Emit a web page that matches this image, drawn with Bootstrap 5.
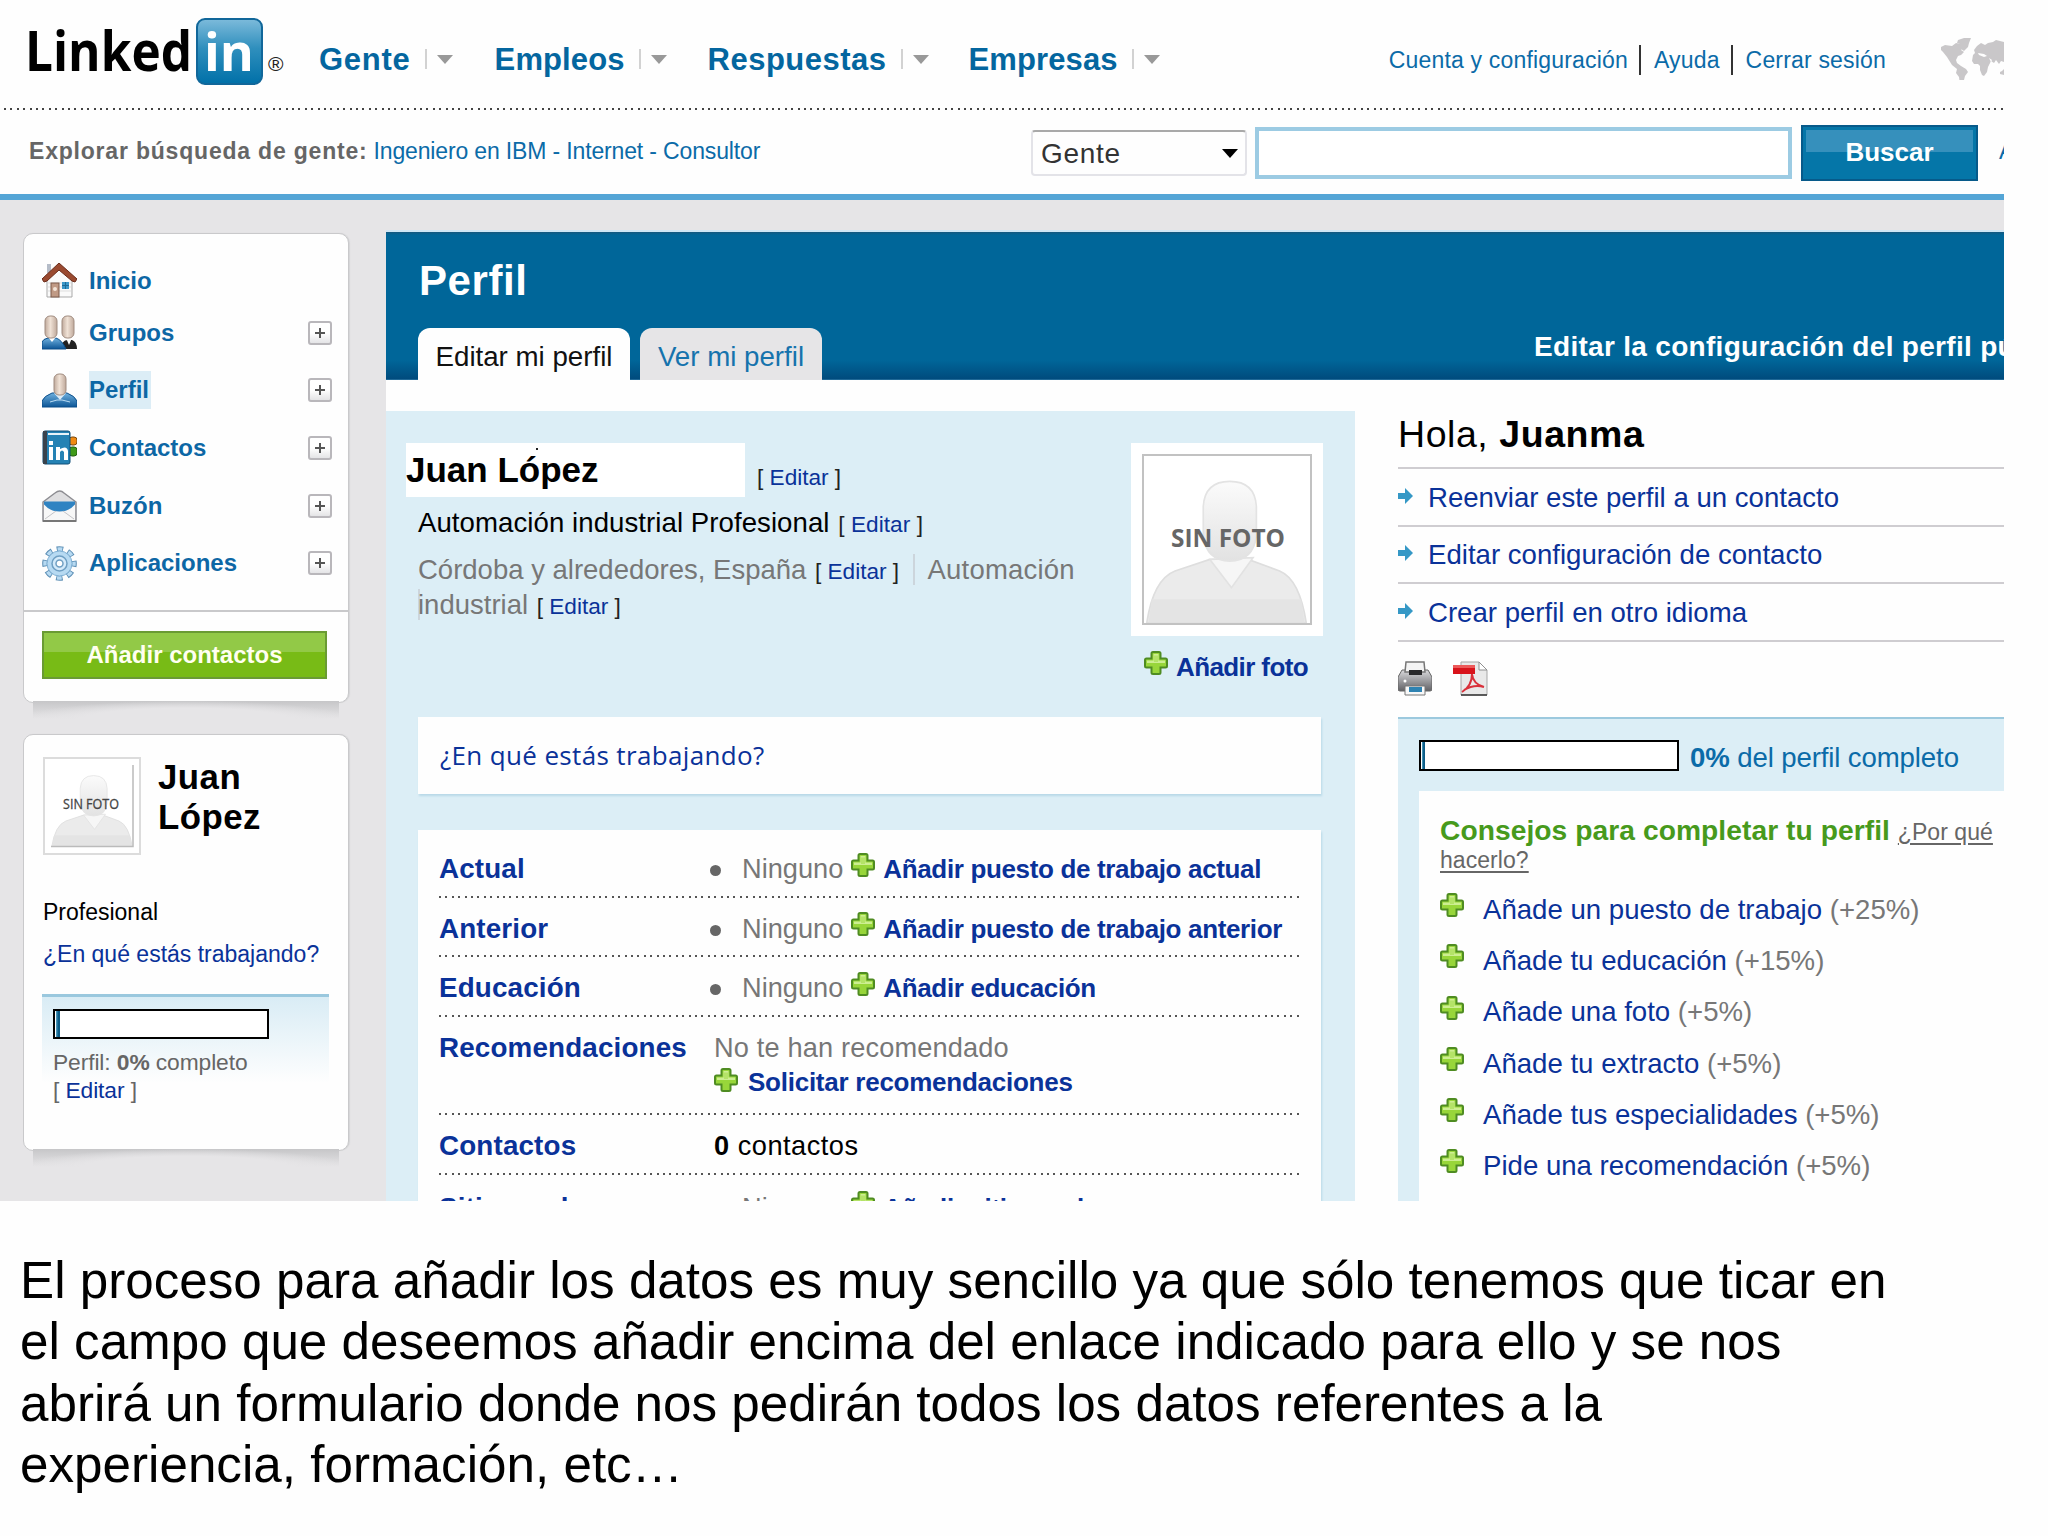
<!DOCTYPE html>
<html lang="es">
<head>
<meta charset="utf-8">
<meta name="viewport" content="width=device-width, initial-scale=1">
<title>LinkedIn - Perfil</title>
<link href="https://cdn.jsdelivr.net/npm/bootstrap@5.3.0/dist/css/bootstrap.min.css" rel="stylesheet">
<style>
body{font-family:"Liberation Sans",Arial,sans-serif;background:#fefefe;color:#000;overflow:hidden;font-size:27.6px}
a{text-decoration:none;color:#0a3299}
svg{display:block;flex:none}
.shot{width:2004px;height:1201px;overflow:hidden;background:#e6e5e7;white-space:nowrap}
.sky a,.sky{color:#0b6ba8}
.top-row{height:108px;padding:10px 0 0 29px;background:#fefefe}
.dots{height:3px;background:repeating-linear-gradient(90deg,#444 0 2px,transparent 2px 6.4px) 4px 0/100% 2px no-repeat #fefefe}
.nav-main{margin-left:35px;gap:40px}
.nav-main a{font-size:31px;font-weight:700;line-height:40px;color:#04669f;letter-spacing:.1px;margin-top:1px}
.nav-main div:nth-child(1) a{letter-spacing:.75px}
.nav-main div:nth-child(1){margin-right:2px}
.nav-main div:nth-child(2){margin-right:1px}
.nav-main div:nth-child(3) a{letter-spacing:.5px}
.tri{border-left:2px solid #d2d2d2;height:20px;padding:6px 0 0 10px;margin-left:14px}
.tri::after{content:"";display:block;border:8px solid transparent;border-top:9px solid #999;border-bottom:0}
.util{font-size:23px;letter-spacing:.18px;padding-top:1px}
.util a+a{border-left:2px solid #333;margin-left:11px;padding-left:13px}
.util a{line-height:30px}
.globe{margin-left:55px}
.search-row{height:83px;background:#fefefe;padding-left:29px}
.search-row>*{flex:none}
.explore{font-size:23px;margin-top:-2px;letter-spacing:-.15px}
.browse{width:1002px}
.explore b{color:#666;letter-spacing:.8px;margin-right:6px}
.pick{width:216px;height:46px;border:2px solid #e3e3e8;border-top:2px solid #a9a9a9;border-radius:4px;padding:2px 7px 0 8px;color:#333;font-size:28px;letter-spacing:.7px;margin-right:8px}
.pick::after{content:"";border:8px solid transparent;border-top:9px solid #000;border-bottom:0}
.field{width:537px;height:52px;border:4px solid #9ccbe3;border-radius:0;padding:0;margin-right:9px}
.go{width:177px;height:56px;border:2px solid #075a8a;box-shadow:inset 0 0 0 3px #0576a8;background:linear-gradient(#3690bc 25px,#0576a8 25px);color:#fff;font-weight:700;font-size:26px;border-radius:0;padding:0;margin-right:21px}
.go:hover{color:#fff}
.blue-line{height:6px;background:#54a5d6}
.side{width:326px;margin:33px 37px 0 23px}
.pane{background:#fefefe;border:1px solid #c9c9cb;border-radius:10px;box-shadow:1px 0 1px #d4d4d6}
.pane-shadow{height:18px;margin:-2px 10px 0;background:radial-gradient(ellipse 55% 100% at 50% 100%,#e6e5e7 60%,transparent 100%),linear-gradient(#c6c6c8,#e6e5e7)}
.menu{padding:23px 16px 0 18px;height:376px}
.menu li{height:57.6px}
.menu li:first-child{height:47px}
.menu a{font-size:24px;font-weight:700;color:#0d67a5;line-height:38px;margin-left:12px}
.menu .here{background:#dcedf6;padding-right:2px}
.more{width:24px;height:24px;border:2px solid #b9b7bb;border-radius:3px;background:linear-gradient(#fff 50%,#e4e4e6)}
.add-btn{display:block;width:285px;height:48px;margin:19px 0 0 18px;border:2px solid #6a9b34;border-radius:0;background:linear-gradient(#92c947 19px,#78bb16 19px);color:#fffff0;font-size:24px;font-weight:700;line-height:43px;padding:0}
.me{padding:22px 19px 0;height:417px}
.me .thumb{border:2px solid #dcdcdc;background:#fff}
.me h2{font-size:34.8px;line-height:40px;font-weight:700;margin:0 0 0 17px;letter-spacing:.5px}
.me p{font-size:23px;line-height:42px;margin:0}
.fade-box{height:88px;margin:19px 0 0 -1px;width:287px;border-top:3px solid #9ac8de;background:linear-gradient(#d9ecf5,#fefefe 86px);padding:12px 0 0 11px;font-size:22.8px;line-height:28px;color:#666;letter-spacing:-.1px}
.meter{border:2.5px solid #000;background:#fff;padding:0 1px}
.meter i{display:block;height:100%;background:linear-gradient(90deg,#5aa7c6,#0a5b86 55%)}
.main-col{width:1618px;margin-top:30px;border-top:2px solid #cfe6f5;background:#fefefe}
.hero{height:148px;background:linear-gradient(#15587f,#006699 3px,#006699 128px,#004b7d 147px,#3f86b0 148px);padding:24px 0 0 32px}
.hero h1{font-size:42px;line-height:50px;font-weight:700;color:#fff;margin:0 0 22px 1px;letter-spacing:.6px}
.hero .nav-tabs{border:0;gap:10px}
.hero .nav-link{border:0;border-radius:12px 12px 0 0;height:52px;padding:0;font-size:27.7px;line-height:58px;text-align:center;color:#1673ad;background:#e6e5e7}
.hero .nav-link.active{background:#fefefe;color:#111}
.w1{width:212px}.w2{width:182px}
.pub{width:470px;overflow:hidden;color:#fff;font-weight:700;font-size:28px;line-height:37px;letter-spacing:.3px}
.profile{width:969px;height:800px;margin-top:31px;background:#dceef6;padding:32px 33px 0 20px}
.who{width:725px}
.name-box{width:339px;height:54px;background:#fff;font-size:35px;line-height:54px;font-weight:700;margin:0;position:relative}
.name-box::after{content:"";position:absolute;left:130px;top:5px;width:2px;height:2px;background:#222}
.ed{font-size:22.6px;line-height:1;color:#222}
.line1{margin:9px 0 0 12px;line-height:34px;letter-spacing:.06px}
.line2{margin:13px 0 0 12px;line-height:34.5px;color:#777;font-size:27.5px}
.line2 .ed{margin-left:1px}
.ind{border-left:2px solid #ccd5dc}
.pic{padding:11px;background:#fff;width:192px;height:193px}
.pic>svg{border:2px solid #c2c2c2}
.addpic{margin:11px 0 0 13px;height:40px}
.bold-link{font-weight:700;font-size:26px;letter-spacing:-.35px}
.sheet{background:#fefefe;margin-left:12px;width:903px;box-shadow:1px 2px 2px #b9d9e8}
.work{height:77px;line-height:77px;margin-top:27px;padding-left:22px;font-family:"Open Sans","Liberation Sans",sans-serif;font-size:26px;letter-spacing:.35px}
.facts{margin-top:36px;padding:8px 21px 0 21px;height:420px}
.fact{padding:14px 0 11px;line-height:34.5px;background:repeating-linear-gradient(90deg,#555 0 2px,transparent 2px 6.4px) bottom/100% 2px no-repeat}
.fact.tall{padding-bottom:15.5px}
.fact dt{width:275px;color:#0a3299;font-size:27.8px;letter-spacing:.15px}
.fact:nth-child(n+6){padding-top:16px}
.fact dd{margin:0;color:#777;font-size:27.2px}
.bul{width:11px;height:11px;border-radius:50%;background:#666;margin:3px 21px 0 -4px}
.plus{width:24px;height:24px}
.fact dd>.plus{margin:-9px 8px 0 8px}
.line-dd{height:34.5px}
.right-col{width:606px;margin-left:43px}
.right-col h2{font-size:37.5px;line-height:44px;margin:32px 0 11px;letter-spacing:.55px}
.right-col .acts li{height:57.6px;border-top:2px solid #cfcdd1;font-size:27.6px;padding-top:1px}
.acts svg{margin:-3px 15px 0 0}
.tools{border-top:2px solid #cfcdd1;padding-top:19px;height:77px;gap:21px}
.done{border-top:2px solid #9cc9de;background:#dceef6;padding-left:21px;height:500px}
.done-head{height:72px;padding-top:5px;letter-spacing:-.12px}
.tips{background:#fefefe;height:430px;padding:25px 0 0 21px}
.tips h3{font-size:28.2px;line-height:29px;margin:0;color:#479a1c;font-weight:700;letter-spacing:.06px}
.tips h3 a{font-size:23px;line-height:1;font-weight:400;color:#666;text-decoration:underline;text-underline-offset:3px}
.tips h3 span{display:block;margin-top:-1px}
.tips li{height:51.3px;line-height:51.3px;color:#777}
.tips li svg{margin:-9px 19px 0 0}
.tips ul{margin-top:11px}
.note{font-size:51.2px;line-height:61.4px;margin:49px 0 0 20px;white-space:nowrap}
</style>
</head>
<body>
<svg width="0" height="0" class="position-absolute">
<defs>
<linearGradient id="gIn" x2="0" y2="1"><stop offset="0" stop-color="#7dbbdb"/><stop offset=".45" stop-color="#2f8fbd"/><stop offset="1" stop-color="#0070a8"/></linearGradient>
<linearGradient id="gMan" x2="0" y2="1"><stop offset="0" stop-color="#fbfbfb"/><stop offset="1" stop-color="#e2e2e2"/></linearGradient>
<linearGradient id="gSkin" x2="1" y2="0"><stop offset="0" stop-color="#c0aa9c"/><stop offset=".45" stop-color="#f0e2d6"/><stop offset="1" stop-color="#bfa99b"/></linearGradient>
<linearGradient id="gSuit" x2="0" y2="1"><stop offset="0" stop-color="#6fb0de"/><stop offset="1" stop-color="#0c5596"/></linearGradient>
<linearGradient id="gPrn" x2="0" y2="1"><stop offset="0" stop-color="#d9d9dc"/><stop offset="1" stop-color="#626266"/></linearGradient>
<symbol id="plus" viewBox="0 0 24 24"><path d="M7.500 2.500q0-1.500 1.500-1.500h6q1.500 0 1.500 1.500v5h5q1.500 0 1.500 1.500v6q0 1.500-1.500 1.500h-5v5q0 1.500-1.500 1.500h-6q-1.500 0-1.500-1.500v-5h-5q-1.500 0-1.500-1.500v-6q0-1.500 1.500-1.500h5z" fill="#98d63a" stroke="#4f8c22" stroke-width="2"/><path d="M9.500 3h5v6.500h6.500V12H3V9.500h6.500z" fill="#cdee92"/><path d="M10 4.500h4v6.500h-4z" fill="#b4e368"/></symbol>
<symbol id="man" viewBox="0 0 100 100"><path d="M2 100Q6 74 19 69L40 62H63L82 69Q94 74 98 100Z" fill="#ebebeb" stroke="#dedede"/><path d="M5 86H95L97 100H3Z" fill="#e4e4e4"/><path d="M40 62L53 79L66 61Z" fill="#f6f6f6" stroke="#e2e2e2"/><path d="M36 30Q37 15 52 15Q67 15 68 30V48Q66 63 52 63Q38 63 36 48Z" fill="url(#gMan)" stroke="#e3e3e3"/></symbol>
<symbol id="arrow" viewBox="0 0 15 16"><path d="M0 5h7V0l8 8-8 8v-5H0z" fill="#3598c6"/></symbol>
<symbol id="pm" viewBox="0 0 20 20"><path d="M10 5v10M5 10h10" stroke="#555" stroke-width="2"/></symbol>
</defs>
</svg>

<div class="shot">
  <header>
    <div class="top-row d-flex align-items-center">
      <svg class="overflow-visible" width="255" height="82" viewBox="29 18 255 82">
        <text x="25" y="71" font-family="Open Sans" font-weight="700" font-size="55" textLength="167" lengthAdjust="spacingAndGlyphs" fill="#000">Linked</text>
        <rect x="197" y="19" width="65" height="65" rx="8" fill="url(#gIn)" stroke="#11679a" stroke-width="2"/>
        <text x="204" y="71" font-family="Open Sans" font-weight="700" font-size="52" textLength="50" lengthAdjust="spacingAndGlyphs" fill="#fff">in</text>
        <text x="268" y="71" font-family="Liberation Sans" font-size="21" fill="#222">®</text>
      </svg>
      <nav class="nav-main d-flex">
        <div class="d-flex align-items-center"><a href="#">Gente</a><span class="tri"></span></div>
        <div class="d-flex align-items-center"><a href="#">Empleos</a><span class="tri"></span></div>
        <div class="d-flex align-items-center"><a href="#">Respuestas</a><span class="tri"></span></div>
        <div class="d-flex align-items-center"><a href="#">Empresas</a><span class="tri"></span></div>
      </nav>
      <div class="util sky ms-auto d-flex"><a href="#">Cuenta y configuración</a><a href="#">Ayuda</a><a href="#">Cerrar sesión</a></div>
      <svg class="globe" width="63" height="42" viewBox="0 0 63 42" fill="#c9c7c9"><path d="M0 9l4-2 7 1 4-3 5 1 2 4-2 2 3 2-3 3-3 1-2 4 1 3 4 3 5 3 2 3-3 4-1 4-3 6-1-1-1-8-3-4 1-4-5-4-5-8-4-5-2-2z"/><path d="M17 2l6-2h7l-2 5-1 4-4 4-3-2-1-5-3-1z"/><path d="M34 15l-1-3 3-4 4-3 4 2 3-2 5-1 3-2 8 2v20l-3-1-2 3-3-4-2 3-3-2-3 6-1 5-3 4-2-1-2-5v-4l-2-2-4 0-2-3 1-6z"/><path d="M59 34l2-1 2-2v6l-4-1z"/><path d="M37 15l6 1 3 2-3 1-5-2zM48 20l3 2-1 2z" fill="#fefefe"/></svg>
    </div>
    <div class="dots"></div>
    <div class="search-row d-flex align-items-center">
      <div class="explore browse sky"><b>Explorar búsqueda de gente:</b><a href="#">Ingeniero en IBM</a> - <a href="#">Internet</a> - <a href="#">Consultor</a></div>
      <div class="pick d-flex align-items-center justify-content-between">Gente</div>
      <input class="field form-control" type="text" aria-label="Buscar">
      <button class="go btn">Buscar</button>
      <a class="explore sky" href="#">Avanzada</a>
    </div>
    <div class="blue-line"></div>
  </header>

  <div class="d-flex">
    <aside class="side flex-shrink-0">
      <section class="pane" style="height:470px">
        <ul class="menu list-unstyled mb-0">
          <li class="d-flex align-items-center">
            <svg width="35" height="35" viewBox="0 0 35 35"><rect x="5" y="1" width="4" height="9" fill="#b5bcc8"/><path d="M5 16L17 5l13 11v18H5z" fill="#fafafa" stroke="#a9a9a9"/><path d="M6 20h23M6 24h23M6 28h23" stroke="#ddd"/><path d="M0 16L17 0l18 16-2 3-3-1L17 7 5 18l-3 1z" fill="#9a4a30" stroke="#6b2c1a"/><rect x="9" y="20" width="8" height="14" fill="#c09a85" stroke="#7d5a4a"/><circle cx="13" cy="26" r="2" fill="#f3e4d8"/><rect x="20" y="19" width="7" height="7" fill="#3c97c8"/><path d="M23.500 19v7M20 22.500h7" stroke="#1c6a98"/></svg>
            <a href="#">Inicio</a></li>
          <li class="d-flex align-items-center">
            <svg width="35" height="35" viewBox="0 0 35 35"><path d="M20 34q-1-9 6-9h4q5 2 5 9z" fill="#222"/><path d="M24 23l3 7 3-7z" fill="#fff"/><path d="M0 34v-7q1-3 6-4h8q6 2 10 11z" fill="url(#gSuit)" stroke="#0c4f8a"/><path d="M6 22l4 5 4-5z" fill="#fff"/><rect x="3" y="1" width="12" height="22" rx="5" fill="url(#gSkin)" stroke="#a08c80"/><rect x="20" y="1" width="12" height="22" rx="5" fill="url(#gSkin)" stroke="#a08c80"/></svg>
            <a href="#">Grupos</a><span class="more ms-auto"><svg width="20" height="20"><use href="#pm"/></svg></span></li>
          <li class="d-flex align-items-center">
            <svg width="35" height="35" viewBox="0 0 35 35"><path d="M0 34v-6q2-5 10-8h15q8 3 10 8v6z" fill="url(#gSuit)" stroke="#0c4f8a"/><path d="M12 20l6 7 6-7z" fill="#dcebf6"/><path d="M8 29l7-2 5 0 8 2" stroke="#b9dbf3" fill="none"/><rect x="12" y="1" width="12" height="21" rx="5" fill="url(#gSkin)" stroke="#a08c80"/></svg>
            <a class="here" href="#">Perfil</a><span class="more ms-auto"><svg width="20" height="20"><use href="#pm"/></svg></span></li>
          <li class="d-flex align-items-center">
            <svg width="35" height="35" viewBox="0 0 35 35"><rect x="27" y="7" width="8" height="8" rx="3" fill="#f08a12" stroke="#7a4a10"/><rect x="27" y="17" width="8" height="9" rx="3" fill="#3f9a18" stroke="#245f10"/><rect x="1" y="1" width="27" height="33" rx="2" fill="#2582b4" stroke="#0f4f78"/><path d="M1 1h4v33H1z" fill="#39424c"/><path d="M6 4h21" stroke="#e8f3f9" stroke-width="2"/><path d="M7 11h4v4H7zM7 17h4v13H7zM14 17h4v2q7-4 8 2v9h-4v-8q-2-3-4 0v8h-4z" fill="#fff"/></svg>
            <a href="#">Contactos</a><span class="more ms-auto"><svg width="20" height="20"><use href="#pm"/></svg></span></li>
          <li class="d-flex align-items-center">
            <svg width="35" height="32" viewBox="0 0 35 32"><path d="M1 12L13 3q5-4 9 0l12 9v19H1z" fill="#dedee0" stroke="#8d8d92" stroke-width="1.500"/><path d="M2 12h31v18H2z" fill="#f7f7f7"/><path d="M2 11.500h31v3q-6 7-15.500 7T2 14.500z" fill="#2f83c2"/><path d="M3 29l11-8M32 29l-11-8" stroke="#c4c4c8"/><path d="M1 31h33" stroke="#777" stroke-width="2"/></svg>
            <a href="#">Buzón</a><span class="more ms-auto"><svg width="20" height="20"><use href="#pm"/></svg></span></li>
          <li class="d-flex align-items-center">
            <svg width="35" height="35" viewBox="0 0 35 35"><circle cx="17.500" cy="17.500" r="14.800" fill="none" stroke="#5d8fb5" stroke-width="5" stroke-dasharray="6.600 5.020" stroke-dashoffset="3.300"/><circle cx="17.500" cy="17.500" r="14.500" fill="none" stroke="#b7daf2" stroke-width="3.500" stroke-dasharray="4.800 6.590" stroke-dashoffset="2.400"/><circle cx="17.500" cy="17.500" r="12.500" fill="#b7daf2" stroke="#7fb0d4"/><circle cx="17.500" cy="17.500" r="7.500" fill="#d4eafa" stroke="#6f9fc3" stroke-width="1.500"/><circle cx="17.500" cy="17.500" r="3.500" fill="#fff" stroke="#6f9fc3" stroke-width="1.500"/></svg>
            <a href="#">Aplicaciones</a><span class="more ms-auto"><svg width="20" height="20"><use href="#pm"/></svg></span></li>
        </ul>
        <div class="border-top border-2" style="border-color:#c9c9cb!important"><a class="add-btn btn" href="#">Añadir contactos</a></div>
      </section>
      <div class="pane-shadow"></div>
      <section class="pane me" style="margin-top:15px">
        <div class="d-flex pb-2">
          <div class="thumb"><svg width="94" height="94" viewBox="0 0 94 94"><use href="#man" x="5" y="4" width="84" height="84"/><path d="M6 87.500H88V6" fill="none" stroke="#bbb" stroke-width="1.500"/><text x="18" y="50" font-family="Open Sans" font-size="14.500" textLength="56" lengthAdjust="spacingAndGlyphs" fill="#444" stroke="#444" stroke-width=".3">SIN FOTO</text></svg></div>
          <h2>Juan<br>López</h2>
        </div>
        <p style="margin-top:28px">Profesional</p>
        <p><a href="#">¿En qué estás trabajando?</a></p>
        <div class="fade-box">
          <div class="meter" style="width:216px;height:30px;margin-bottom:9px"><i style="width:4px"></i></div>
          Perfil: <b>0%</b> completo<br>[ <a href="#">Editar</a> ]
        </div>
      </section>
      <div class="pane-shadow"></div>
    </aside>

    <main class="main-col flex-shrink-0">
      <div class="hero">
        <h1>Perfil</h1>
        <div class="d-flex">
          <div class="nav nav-tabs"><a class="nav-link active w1" href="#">Editar mi perfil</a><a class="nav-link w2" href="#">Ver mi perfil</a></div>
          <a class="pub ms-auto" href="#">Editar la configuración del perfil público</a>
        </div>
      </div>
      <div class="d-flex">
        <section class="profile flex-shrink-0">
          <div class="d-flex" style="height:247px">
            <div class="who flex-shrink-0">
              <div class="d-flex"><h2 class="name-box">Juan López</h2><span class="ed" style="padding:24px 0 0 12px">[ <a href="#">Editar</a> ]</span></div>
              <p class="line1 mb-0">Automación industrial Profesional <span class="ed" style="margin-left:1px">[ <a href="#">Editar</a> ]</span></p>
              <p class="line2 mb-0">Córdoba y alrededores, España <span class="ed">[ <a href="#">Editar</a> ]</span> <span class="ind ps-2" style="margin-left:6px">&#8202;<span style="letter-spacing:.2px">&#8202;Automación</span></span><br><span class="ind" style="margin-right:-2px"></span>industrial <span class="ed">[ <a href="#">Editar</a> ]</span></p>
            </div>
            <div>
              <div class="pic"><svg width="170" height="171" viewBox="0 0 166 167"><use href="#man" width="166" height="167" x="-.5"/><text x="27" y="91" font-family="Open Sans" font-weight="700" font-size="25.500" textLength="114" lengthAdjust="spacingAndGlyphs" fill="#666">SIN FOTO</text></svg></div>
              <div class="addpic d-flex align-items-center"><svg class="plus" style="margin:-8px 8px 0 0"><use href="#plus"/></svg><a class="bold-link" href="#" style="letter-spacing:-.6px">Añadir foto</a></div>
            </div>
          </div>
          <div class="sheet work"><a href="#">¿En qué estás trabajando?</a></div>
          <dl class="sheet facts mb-0">
            <div class="fact d-flex"><dt>Actual</dt><dd class="line-dd d-flex align-items-center"><span class="bul"></span>Ninguno<svg class="plus"><use href="#plus"/></svg><a class="bold-link" href="#">Añadir puesto de trabajo actual</a></dd></div>
            <div class="fact d-flex"><dt>Anterior</dt><dd class="line-dd d-flex align-items-center"><span class="bul"></span>Ninguno<svg class="plus"><use href="#plus"/></svg><a class="bold-link" href="#">Añadir puesto de trabajo anterior</a></dd></div>
            <div class="fact d-flex"><dt>Educación</dt><dd class="line-dd d-flex align-items-center"><span class="bul"></span>Ninguno<svg class="plus"><use href="#plus"/></svg><a class="bold-link" href="#">Añadir educación</a></dd></div>
            <div class="fact tall d-flex"><dt>Recomendaciones</dt><dd><span style="letter-spacing:.15px">No te han recomendado</span><div class="d-flex align-items-center"><svg class="plus" style="margin:-5px 10px 0 0"><use href="#plus"/></svg><a class="bold-link" href="#" style="letter-spacing:-.25px">Solicitar recomendaciones</a></div></dd></div>
            <div class="fact d-flex"><dt>Contactos</dt><dd class="text-black" style="letter-spacing:.5px"><b>0</b> contactos</dd></div>
            <div class="fact d-flex"><dt>Sitios web</dt><dd class="line-dd d-flex align-items-center"><span class="bul"></span>Ninguno<svg class="plus"><use href="#plus"/></svg><a class="bold-link" href="#">Añadir sitios web</a></dd></div>
          </dl>
        </section>

        <aside class="right-col flex-shrink-0">
          <h2>Hola, <b>Juanma</b></h2>
          <ul class="acts list-unstyled mb-0">
            <li class="d-flex align-items-center"><svg width="15" height="16"><use href="#arrow"/></svg><a href="#">Reenviar este perfil a un contacto</a></li>
            <li class="d-flex align-items-center"><svg width="15" height="16"><use href="#arrow"/></svg><a href="#">Editar configuración de contacto</a></li>
            <li class="d-flex align-items-center"><svg width="15" height="16"><use href="#arrow"/></svg><a href="#">Crear perfil en otro idioma</a></li>
          </ul>
          <div class="tools d-flex">
            <svg width="34" height="35" viewBox="0 0 34 35"><path d="M4 9h26l4 7v12q0 2-2 2H2q-2 0-2-2V16z" fill="url(#gPrn)" stroke="#666"/><path d="M8 1h18l1 10H7z" fill="#f4f4f4" stroke="#777" stroke-width="1.500"/><path d="M11 9h13v5H11z" fill="#2a2a2c"/><circle cx="7" cy="20" r="1.500" fill="#fff"/><path d="M7 25h20v9H7z" fill="#f8f8f8" stroke="#777"/><path d="M11 26h13v5H11z" fill="#2f83b2"/></svg>
            <svg width="35" height="35" viewBox="0 0 35 35"><path d="M8 1h18l8 8v25H8z" fill="#e9e9e9" stroke="#a5a5a5"/><path d="M26 1v8h8z" fill="#fff" stroke="#8f8f8f"/><path d="M8 34h26" stroke="#333" stroke-width="1.500"/><path d="M0 4h22v9H0z" fill="#d8131b"/><path d="M0 4h22v3H0z" fill="#ec5a5a"/><path d="M9 31q10-6 10-18q1 10 12 13q-10-3-20 3" fill="none" stroke="#d9303a" stroke-width="2"/></svg>
          </div>
          <section class="done">
            <div class="done-head d-flex align-items-center sky"><div class="meter" style="width:260px;height:31px;margin:-4px 11px 0 0"><i style="width:3px"></i></div><span><b>0%</b> del perfil completo</span></div>
            <div class="tips">
              <h3>Consejos para completar tu perfil <a href="#">¿Por qué</a><span><a href="#">hacerlo?</a></span></h3>
              <ul class="list-unstyled mb-0">
                <li class="d-flex align-items-center"><svg class="plus"><use href="#plus"/></svg><span><a href="#">Añade un puesto de trabajo</a> (+25%)</span></li>
                <li class="d-flex align-items-center"><svg class="plus"><use href="#plus"/></svg><span><a href="#">Añade tu educación</a> (+15%)</span></li>
                <li class="d-flex align-items-center"><svg class="plus"><use href="#plus"/></svg><span><a href="#">Añade una foto</a> (+5%)</span></li>
                <li class="d-flex align-items-center"><svg class="plus"><use href="#plus"/></svg><span><a href="#">Añade tu extracto</a> (+5%)</span></li>
                <li class="d-flex align-items-center"><svg class="plus"><use href="#plus"/></svg><span><a href="#">Añade tus especialidades</a> (+5%)</span></li>
                <li class="d-flex align-items-center"><svg class="plus"><use href="#plus"/></svg><span><a href="#">Pide una recomendación</a> (+5%)</span></li>
              </ul>
            </div>
          </section>
        </aside>
      </div>
    </main>
  </div>
</div>
<p class="note">El proceso para añadir los datos es muy sencillo ya que sólo tenemos que ticar en<br>el campo que deseemos añadir encima del enlace indicado para ello y se nos<br>abrirá un formulario donde nos pedirán todos los datos referentes a la<br>experiencia, formación, etc…</p>
<script src="https://cdn.jsdelivr.net/npm/bootstrap@5.3.0/dist/js/bootstrap.bundle.min.js"></script>
</body>
</html>
